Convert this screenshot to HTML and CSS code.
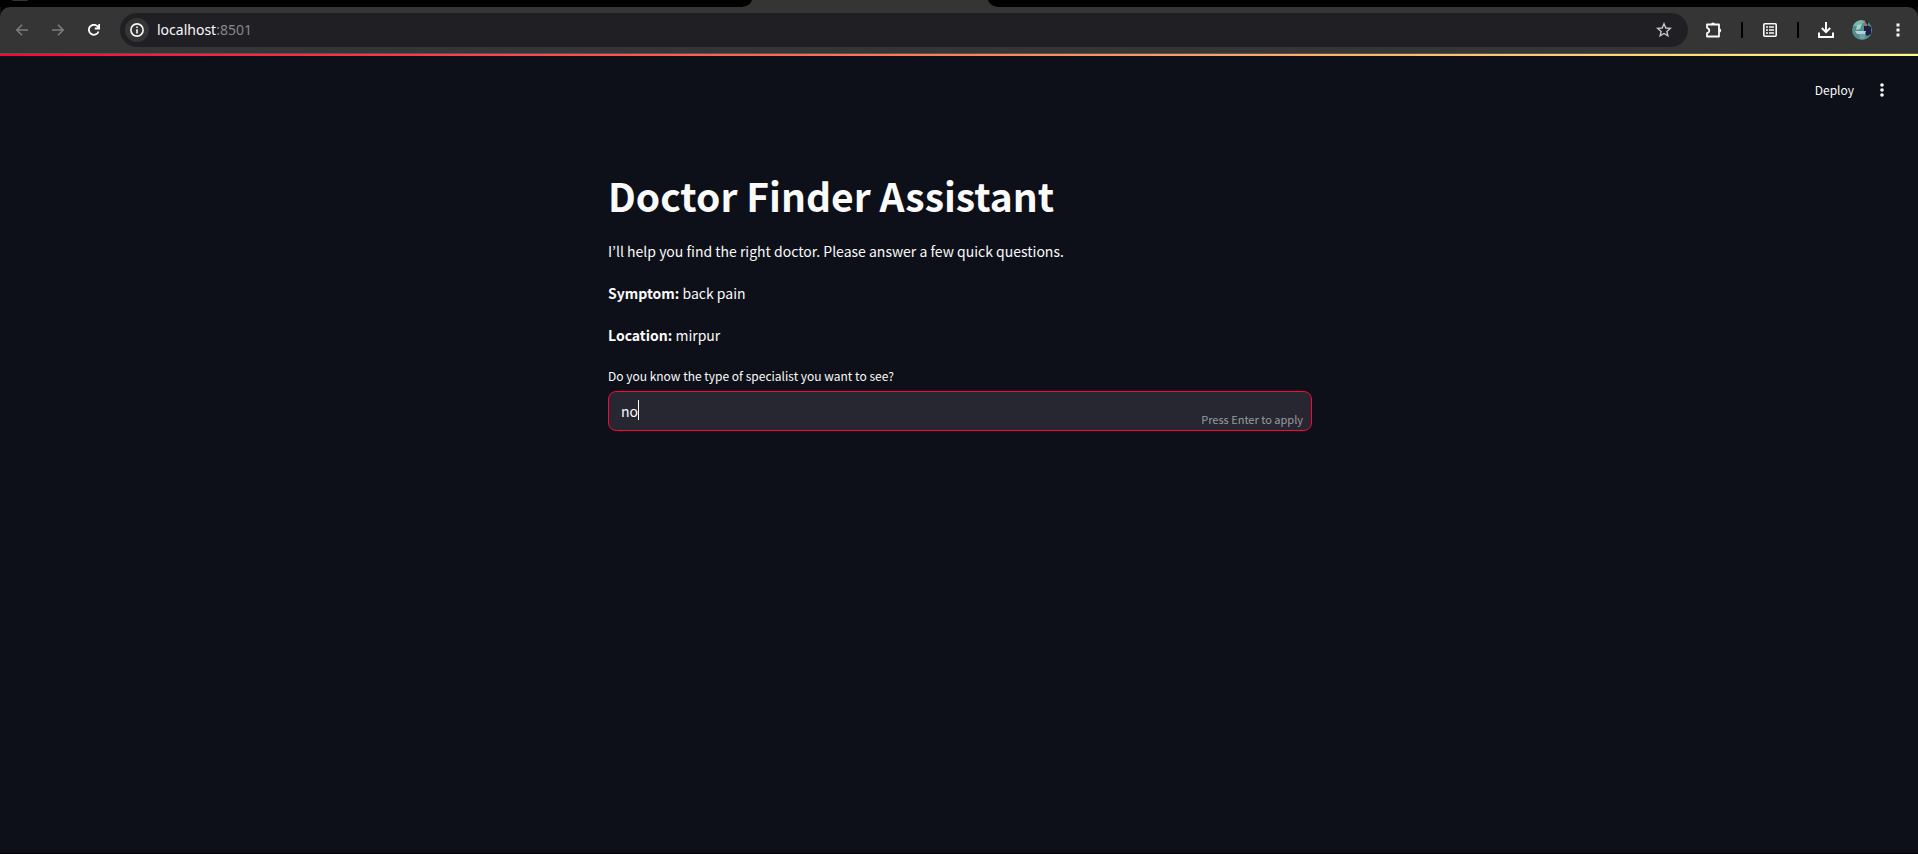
FILE: index.html
```html
<!DOCTYPE html>
<html lang="en">
<head>
<meta charset="utf-8">
<title>Doctor Finder Assistant</title>
<link rel="stylesheet" href="styles.css">
</head>
<body>
<div class="tabstrip"><span class="tab-search"></span><span class="tab"></span></div>
<header class="toolbar">
  <nav class="nav" aria-label="Browser navigation">
    <button class="icon dim" aria-label="Back"><svg width="12" height="12" viewBox="0 0 12 12"><path d="M12 6H1M6 .7L.9 6 6 11.300" stroke-width="1.600"/></svg></button>
    <button class="icon dim" aria-label="Forward"><svg width="12" height="12" viewBox="0 0 12 12"><path d="M0 6H11M6 .7L11.100 6 6 11.300" stroke-width="1.600"/></svg></button>
    <button class="icon" aria-label="Reload"><svg width="12" height="12" viewBox="0 0 12 12"><path d="M10.600 7.500A5 5 0 1 1 9.600 2.400L11 4M11.200 0V4.500H6.800" stroke-width="1.800"/></svg></button>
  </nav>
  <div class="omnibox">
    <button class="site-info" aria-label="Site information"><svg width="14" height="14" viewBox="0 0 14 14"><circle cx="7" cy="7" r="6.100" stroke-width="1.600"/><path d="M7 6.200V10.400M7 3.500V5" stroke-width="1.600"/></svg></button>
    <div class="url">localhost<span class="port">:8501</span></div>
    <button class="icon star" aria-label="Bookmark"><svg width="16" height="16" viewBox="0 0 16 16"><path d="M8 1.800L9.800 6 14.300 6.400 10.900 9.400 11.900 13.800 8 11.500 4.100 13.800 5.100 9.400 1.700 6.400 6.200 6Z" stroke-width="1.400"/></svg></button>
  </div>
  <div class="actions">
    <button class="icon" aria-label="Extensions"><svg width="18" height="18" viewBox="0 0 18 18"><path d="M2 3.500H14V15.500H2V12.200C5 11.500 5 7.500 2 6.800Z" stroke-width="1.800" stroke-linejoin="round"/><path class="solid" d="M6 3.500A2 2 0 0 1 10 3.500ZM14 7.200A2 2 0 0 1 14 11.600Z"/></svg></button>
    <span class="divider"></span>
    <button class="icon" aria-label="Reading list"><svg width="14" height="14" viewBox="0 0 14 14"><rect x=".8" y=".8" width="12.400" height="12.400" rx="1" stroke-width="1.600"/><path d="M3 4H5M6 4H11M3 7H5M6 7H11M3 10H5M6 10H11" stroke-width="1.400"/></svg></button>
    <span class="divider"></span>
    <button class="icon" aria-label="Downloads"><svg width="16" height="16" viewBox="0 0 16 16"><path d="M8 0V10M3.800 6L8 10.200 12.200 6M1 10.500V15H15V10.500" stroke-width="2"/></svg></button>
    <button class="icon" aria-label="Profile"><svg width="20" height="20" viewBox="0 0 20 20" stroke="none"><circle cx="10" cy="10" r="10" fill="#4f8f8c"/><path d="M1 6A10 10 0 0 1 9 0L13 2 6 6H1Z" fill="#7db5ab"/><path d="M5 5L10 4 8 9 4 10Z" fill="#a9cfc9"/><path d="M12 6L15 5 19 7V14L15 16 12 11Z" fill="#1c1d45"/><path d="M12 2H15V6H12Z" fill="#a76c51"/><path d="M13 0L16 2V5L14 3Z" fill="#1d1c25"/><path d="M3 11H14L13 14H5Z" fill="#b5d0d4"/><path d="M7 14H13V19H8Z" fill="#6f9ea6"/></svg></button>
    <button class="icon" aria-label="Browser menu"><svg width="4" height="14" viewBox="0 0 4 14"><path class="solid" d="M.5.500h3v3h-3ZM.5 5.500h3v3h-3ZM.5 10.500h3v3h-3Z"/></svg></button>
  </div>
</header>
<div class="decoration"></div>
<div class="app-header">
  <button class="deploy">Deploy</button>
  <button class="icon" aria-label="App menu"><svg width="4" height="14" viewBox="0 0 4 14"><g class="solid"><circle cx="2" cy="2" r="1.800"/><circle cx="2" cy="7" r="1.800"/><circle cx="2" cy="12" r="1.800"/></g></svg></button>
</div>
<main class="content">
  <h1>Doctor Finder Assistant</h1>
  <p>I’ll help you find the right doctor. Please answer a few quick questions.</p>
  <p><strong>Symptom:</strong> back pain</p>
  <p><strong>Location:</strong> mirpur</p>
  <label for="specialist">Do you know the type of specialist you want to see?</label>
  <div class="field">
    <input id="specialist" type="text" value="no" autofocus>
    <span class="caret"></span>
    <span class="hint">Press Enter to apply</span>
  </div>
</main>
</body>
</html>
```
FILE: styles.css
```css
* { box-sizing: border-box; }
body {
  margin: 0;
  min-height: 100vh;
  background: #0d1018;
  border-bottom: 1px solid #000;
  color: #fafafa;
  font: 14px/26px "Noto Sans CJK KR", "Noto Sans", sans-serif;
}
button { padding: 0; border: 0; background: none; color: inherit; font: inherit; }
svg { display: block; fill: none; stroke: currentColor; }
svg[stroke="none"] { stroke: none; }
.solid { fill: currentColor; stroke: none; }
.tabstrip { position: relative; height: 7px; background: #000; }
.tab-search { position: absolute; left: 11px; top: -5px; width: 18px; height: 6px; border-radius: 3px; background: #353535; }
.tab { position: absolute; left: 753px; top: 0; width: 234px; height: 7px; background: #353535; }
.tab::before, .tab::after { content: ""; position: absolute; bottom: 0; width: 10px; height: 7px; }
.tab::before { right: 100%; background: radial-gradient(circle at 0 -3px, #000 9px, #353535 10px); }
.tab::after { left: 100%; background: radial-gradient(circle at 10px -3px, #000 9px, #353535 10px); }
.toolbar {
  display: flex; align-items: center; height: 47px; padding: 6px 10px 7px 12px;
  background: #353535; border-bottom: 1px solid #555; border-radius: 10px 10px 0 0;
  box-shadow: 0 -7px 0 -1px #000;
}
.nav { display: flex; gap: 16px; width: 108px; }
.icon { display: flex; align-items: center; justify-content: center; width: 20px; height: 20px; flex: none; }
.dim { color: #7c7c7c; }
.omnibox { flex: 1; display: flex; align-items: center; height: 34px; padding: 0 14px 0 5px; border-radius: 17px; background: #202024; }
.site-info { display: flex; align-items: center; justify-content: center; width: 24px; height: 24px; border-radius: 12px; background: #353535; }
.url { flex: 1; padding-left: 8px; font: 14px/22px "Noto Sans", sans-serif; }
.port { color: #87878a; }
.star { color: #c7c7c7; }
.actions { display: flex; align-items: center; gap: 16px; padding-left: 16px; }
.divider { width: 2px; height: 16px; margin: 0 1px; background: #000; }
.decoration { height: 2px; background: linear-gradient(90deg, #ff0438, #fffd80); }
.app-header { display: flex; align-items: center; justify-content: flex-end; gap: 18px; height: 68px; padding-right: 26px; }
.deploy { font-size: 12px; }
.content { width: 706px; max-width: 100%; margin: 0 auto; padding: 44px 0 0 2px; }
h1 { margin: 0 0 16px; font-size: 39px; line-height: 54px; font-weight: 700; }
p { margin: 0 0 16px; }
label { display: block; margin-bottom: 4px; font-size: 12px; line-height: 23px; }
.field { position: relative; }
input {
  display: block; width: 100%; height: 40px; padding: 0 12px; border: 1px solid #ff0438; border-radius: 8px;
  outline: 0; background: #262730; color: #fafafa; caret-color: transparent; font: inherit;
}
.caret { position: absolute; left: 30px; top: 9px; width: 1px; height: 20px; background: #fff; }
.hint { position: absolute; right: 9px; bottom: 4px; font-size: 11px; line-height: 16px; color: #9b9ba0; }
```
